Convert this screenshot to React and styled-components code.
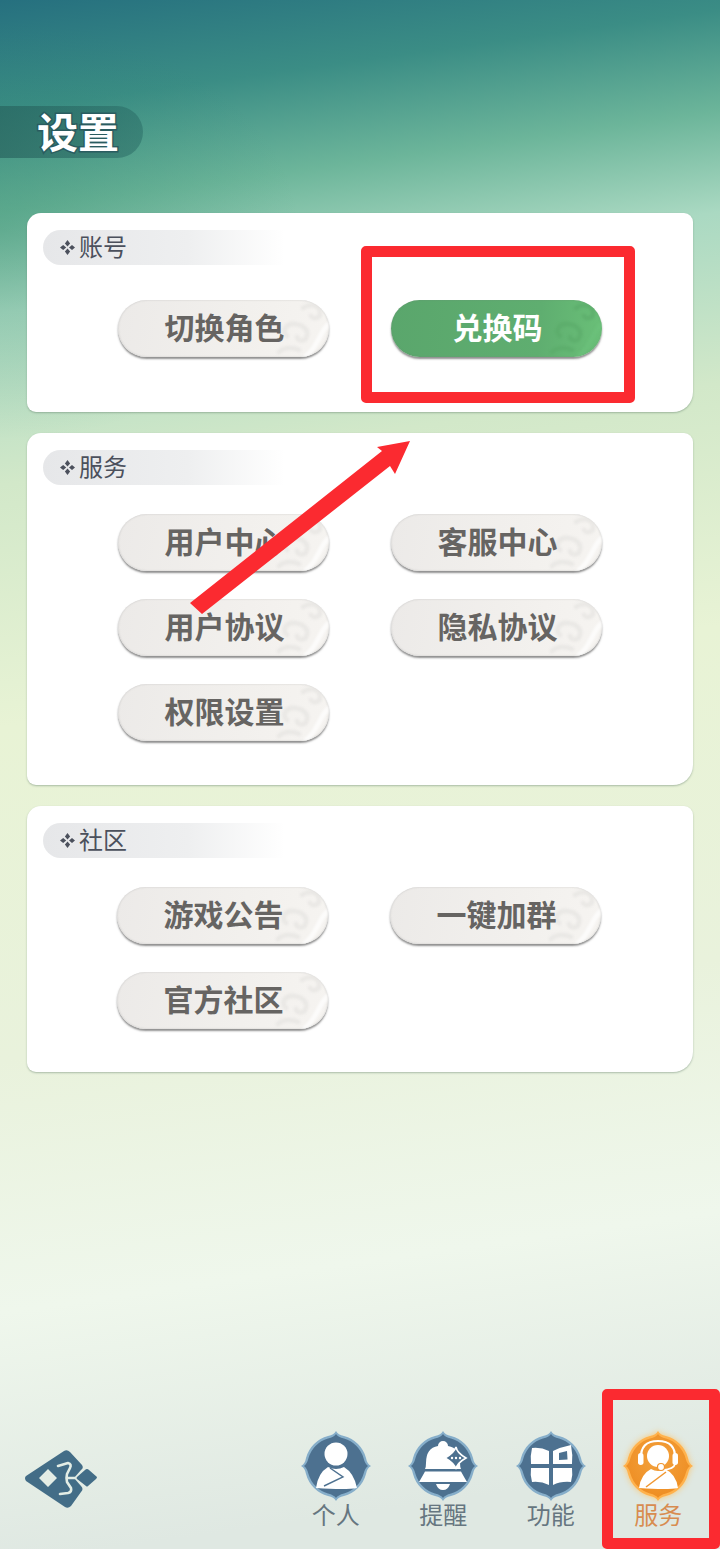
import React from 'react';
import styled, { createGlobalStyle } from 'styled-components';

const GlobalStyle = createGlobalStyle`
  html, body { margin: 0; padding: 0; }
  body { font-family: "Noto Sans CJK SC", "Noto Sans", sans-serif; }
`;

const Page = styled.div`
  position: relative;
  width: 720px;
  height: 1549px;
  overflow: hidden;
  display: flex;
  flex-direction: column;
  padding-top: 106px;
  box-sizing: border-box;
  background:
    radial-gradient(ellipse 300px 210px at 0 230px, rgba(40, 130, 100, 0.28), rgba(40, 130, 100, 0)),
    linear-gradient(172deg, #26707f 0, #3b8d85 110px, #6cb59a 210px, #aad9c2 310px, #d2e8c9 480px, #e8f3d5 720px, #e9f2dc 1050px, #eff7ec 1300px, #dfe8e2 1549px);
`;

const TitleBar = styled.div`
  width: 143px;
  height: 52px;
  box-sizing: border-box;
  padding-left: 37px;
  border-radius: 0 26px 26px 0;
  background: linear-gradient(90deg, rgba(40, 100, 95, 0.7), rgba(40, 105, 100, 0.5));
  display: flex;
  align-items: center;
`;

const Title = styled.h1`
  margin: -4px 0 0;
  font-size: 41px;
  line-height: 52px;
  font-weight: 700;
  color: #fff;
  -webkit-text-stroke: 3px #2a5c60;
  paint-order: stroke fill;
`;

const Cards = styled.div`
  display: flex;
  flex-direction: column;
  gap: 21px;
  margin: 55px 27px 0;
`;

const Card = styled.section`
  background: #fff;
  border-radius: 14px 9px 20px 9px;
  box-shadow: 0 1px 2px rgba(90, 120, 100, 0.45);
  padding: 17px 0 0 16px;
  height: ${p => p.$height}px;
  box-sizing: border-box;
`;

const SectionLabel = styled.div`
  width: 242px;
  height: 35px;
  border-radius: 18px 0 0 18px;
  background: linear-gradient(90deg, #e6e7e9 0, #eeeff0 60%, #ffffff 100%);
  display: flex;
  align-items: center;
  gap: 4px;
  padding-left: 17px;
  box-sizing: border-box;
  color: #4b505c;
  font-size: 24px;
`;

const LabelText = styled.span`
  display: block;
  height: 35px;
  line-height: 31px;
`;

const ButtonGrid = styled.div`
  display: grid;
  grid-template-columns: 211px 211px;
  column-gap: 62px;
  row-gap: 28px;
  margin-top: ${p => p.$top}px;
  margin-left: ${p => p.$left}px;
`;

const Button = styled.button`
  position: relative;
  width: 211px;
  height: 57px;
  border: none;
  border-radius: 29px;
  padding: 0 0 0 2px;
  overflow: hidden;
  font-family: inherit;
  font-size: 30px;
  font-weight: 700;
  line-height: 52px;
  color: ${p => (p.$primary ? '#fff' : '#666462')};
  background: ${p => (p.$primary
    ? 'linear-gradient(95deg, #5aa66c 0, #5fae70 70%, #6ac078 100%)'
    : 'linear-gradient(100deg, #eceae8 0, #f2f0ed 60%, #f6f4f1 100%)')};
  box-shadow: 0 2px 2px rgba(70, 70, 70, 0.6), inset 0 0 2px rgba(120, 120, 120, 0.35);
`;

const ButtonText = styled.span`
  position: relative;
  display: block;
  height: 57px;
`;

const Cloud = styled.svg`
  position: absolute;
  right: 0;
  top: 0;
  width: 66px;
  height: 57px;
  filter: blur(0.8px);
`;

const Nav = styled.nav`
  margin-top: auto;
  height: 119px;
  display: flex;
  align-items: flex-start;
  padding-left: 25px;
`;

const Logo = styled.svg`
  width: 72px;
  height: 58px;
  margin-top: 20px;
  margin-right: 185px;
`;

const NavItem = styled.div`
  width: 107.5px;
  display: flex;
  flex-direction: column;
  align-items: center;
  color: ${p => (p.$active ? '#d88c50' : '#667680')};
  font-size: 24px;
  line-height: 30px;
`;

const Badge = styled.svg`
  width: 72px;
  height: 72px;
  display: block;
  margin-bottom: -3px;
  ${p => p.$active && 'filter: drop-shadow(0 0 3px rgba(255, 190, 90, 0.8));'}
`;

const RedFrame = styled.div`
  position: absolute;
  left: ${p => p.$x}px;
  top: ${p => p.$y}px;
  width: ${p => p.$w}px;
  height: ${p => p.$h}px;
  box-sizing: border-box;
  border: 11px solid #fb2a30;
  border-radius: 5px;
  pointer-events: none;
`;

const ArrowLayer = styled.svg`
  position: absolute;
  left: 0;
  top: 0;
  width: 720px;
  height: 700px;
  pointer-events: none;
`;

const CloudArt = ({ swirl, edge }) => (
  <Cloud viewBox="0 0 66 57" fill="none" strokeLinecap="round">
    <g stroke={swirl} strokeWidth="4.500">
      <path d="M40 8c7-5 16-3 17 4 1 6-6 8-9 4" />
      <path d="M24 36c-6-6 0-13 8-12 9 1 15 7 11 14-2 4-8 3-9-1" />
      <path d="M16 52c5-5 14-5 20-2" />
    </g>
    <path d="M66 24c-6 4-8 12-12 18-3 6-7 11-12 15" stroke={edge} strokeWidth="5" />
  </Cloud>
);

const Diamonds = () => (
  <svg width="15" height="15" viewBox="0 0 15 15" fill="#4b505c">
    <path d="M7.500 0l2.600 3.400-2.600 3-2.600-3zM7.500 8.600l2.600 3-2.600 3.400-2.600-3.400zM0 7.500l3.200-2.600 3 2.600-3 2.600zM9 7.500l3-2.600 3 2.600-3 2.600z" />
  </svg>
);

const SHELL = 'M36 1Q38 5 44 6A31 31 0 0 1 66 28Q67 34 71 36Q67 38 66 44A31 31 0 0 1 44 66Q38 67 36 71Q34 67 28 66A31 31 0 0 1 6 44Q5 38 1 36Q5 34 6 28A31 31 0 0 1 28 6Q34 5 36 1Z';
const INNER = 'M36 4Q38 7 44 8.500A28.500 28.500 0 0 1 63.500 28Q65 34 68 36Q65 38 63.500 44A28.500 28.500 0 0 1 44 63.500Q38 65 36 68Q34 65 28 63.500A28.500 28.500 0 0 1 8.500 44Q7 38 4 36Q7 34 8.500 28A28.500 28.500 0 0 1 28 8.500Q34 7 36 4Z';

const BadgeShell = ({ outer, inner, active, children }) => (
  <Badge viewBox="0 0 72 72" $active={active}>
    <defs>
      <radialGradient id="orangeFill" cx="50%" cy="40%" r="60%">
        <stop offset="0" stopColor="#f3a23e" />
        <stop offset="1" stopColor="#ee8d22" />
      </radialGradient>
    </defs>
    <path d={SHELL} fill={outer} />
    <path d={INNER} fill={inner} />
    {children}
  </Badge>
);

const PersonIcon = () => (
  <BadgeShell outer="#86aeca" inner="#4d7190">
    <circle cx="36" cy="24" r="11.500" fill="#fff" />
    <path d="M28 37Q36 41 44 37Q54 43 57 58Q46 60 16 58Q18 43 28 37Z" fill="#fff" />
    <path d="M30 38L43 47L24 56" fill="none" stroke="#4d7190" strokeWidth="1.400" />
  </BadgeShell>
);

const BellIcon = () => (
  <BadgeShell outer="#86aeca" inner="#4d7190">
    <path d="M31 16a5 5 0 0 1 10 0Q53 18 53 33Q53 37 54 39H18Q19 37 19 33Q19 18 31 16Z" fill="#fff" />
    <path d="M18 41.500H54Q57 47 60 52H12Q15 47 18 41.500Z" fill="#fff" />
    <path d="M29 54H43Q41 60 36 60Q31 60 29 54Z" fill="#fff" />
    <path d="M49 17Q50 23 59 28Q50 33 49 39Q47 33 38 28Q47 23 49 17Z" fill="#4d7190" stroke="#fff" strokeWidth="1.600" />
    <circle cx="45" cy="28" r="1.200" fill="#fff" />
    <circle cx="49" cy="28" r="1.200" fill="#fff" />
    <circle cx="53" cy="28" r="1.200" fill="#fff" />
  </BadgeShell>
);

const GridIcon = () => (
  <BadgeShell outer="#86aeca" inner="#4d7190">
    <path d="M17 18Q26 17 34 21V34H16Q15 26 17 18Z" fill="#fff" />
    <path d="M38 21Q46 17 56 15Q58 25 57 34H38Z" fill="#fff" />
    <path d="M44 23L52 21L52.500 29.500L44 30Z" fill="#4d7190" />
    <path d="M16 38H34V55Q26 51 17 52Q15 45 16 38Z" fill="#fff" />
    <path d="M38 38H57Q58 45 56 52Q46 51 38 55Z" fill="#fff" />
  </BadgeShell>
);

const HeadsetIcon = () => (
  <BadgeShell outer="#ffb24d" inner="url(#orangeFill)" active>
    <circle cx="36" cy="26" r="11" fill="#fff" />
    <path d="M19 29Q18 11 36 11Q54 11 53 29" fill="none" stroke="#fff" strokeWidth="2.200" />
    <rect x="16" y="23" width="5.500" height="12" rx="2.700" fill="#fff" />
    <rect x="50.500" y="23" width="5.500" height="12" rx="2.700" fill="#fff" />
    <path d="M53 34Q52 39 41 40" fill="none" stroke="#fff" strokeWidth="1.600" />
    <path d="M29 39Q36 43 43 39Q54 44 56 58Q46 60 17 58Q19 44 29 39Z" fill="#fff" />
    <path d="M44 42L24 57" fill="none" stroke="#f0962f" strokeWidth="1.500" />
    <circle cx="39" cy="37" r="3.500" fill="#fff" stroke="#f0962f" strokeWidth="1.200" />
  </BadgeShell>
);

const SECTIONS = [
  { name: '账号', height: 199, top: 35, left: 75, items: ['切换角色', '兑换码'] },
  { name: '服务', height: 352, top: 29, left: 75, items: ['用户中心', '客服中心', '用户协议', '隐私协议', '权限设置'] },
  { name: '社区', height: 266, top: 29, left: 74, items: ['游戏公告', '一键加群', '官方社区'] },
];

const NAV = [
  { label: '个人', icon: <PersonIcon /> },
  { label: '提醒', icon: <BellIcon /> },
  { label: '功能', icon: <GridIcon /> },
  { label: '服务', icon: <HeadsetIcon />, active: true },
];

const App = () => (
  <Page>
    <GlobalStyle />
    <TitleBar>
      <Title>设置</Title>
    </TitleBar>
    <Cards>
      {SECTIONS.map(section => (
        <Card key={section.name} $height={section.height}>
          <SectionLabel>
            <Diamonds />
            <LabelText>{section.name}</LabelText>
          </SectionLabel>
          <ButtonGrid $top={section.top} $left={section.left}>
            {section.items.map(item => {
              const primary = item === '兑换码';
              return (
                <Button key={item} $primary={primary}>
                  <CloudArt
                    swirl={primary ? 'rgba(90,170,105,0.6)' : 'rgba(230,228,225,0.7)'}
                    edge={primary ? 'rgba(110,195,125,0.5)' : 'rgba(255,255,255,0.7)'}
                  />
                  <ButtonText>{item}</ButtonText>
                </Button>
              );
            })}
          </ButtonGrid>
        </Card>
      ))}
    </Cards>
    <Nav>
      <Logo viewBox="0 0 72 58">
        <path
          fillRule="evenodd"
          fill="#436d87"
          d="M1 26L39 1Q42-1 45 2L57 15Q59 18 56 20L49 28L56 36Q59 39 56 42L46 56Q43 59 40 57L1 31Q-1 28 1 26ZM14 28L23 37L32 28L23 19Z"
        />
        <path d="M33 16L43 13Q47 14 45 18L42 24Q41 28 42 32L46 38Q47 42 43 43L35 44M42 28H50" fill="none" stroke="#e3ede5" strokeWidth="2.600" strokeLinecap="round" strokeLinejoin="round" />
        <path d="M62 19Q63 19 64 20L72 27Q72 28 71 29L63 36Q62 37 61 36L52 29Q51 28 52 27L60 20Q61 19 62 19Z" fill="#436d87" />
      </Logo>
      {NAV.map(item => (
        <NavItem key={item.label} $active={item.active}>
          {item.icon}
          {item.label}
        </NavItem>
      ))}
    </Nav>
    <RedFrame $x={361} $y={246} $w={274} $h={157} />
    <RedFrame $x={602} $y={1389} $w={118} $h={160} />
    <ArrowLayer viewBox="0 0 720 700">
      <polygon points="190,603 382,451 377,447 410,441 395,474 390,466 202,614" fill="#fb2a30" />
    </ArrowLayer>
  </Page>
);

export default App;
